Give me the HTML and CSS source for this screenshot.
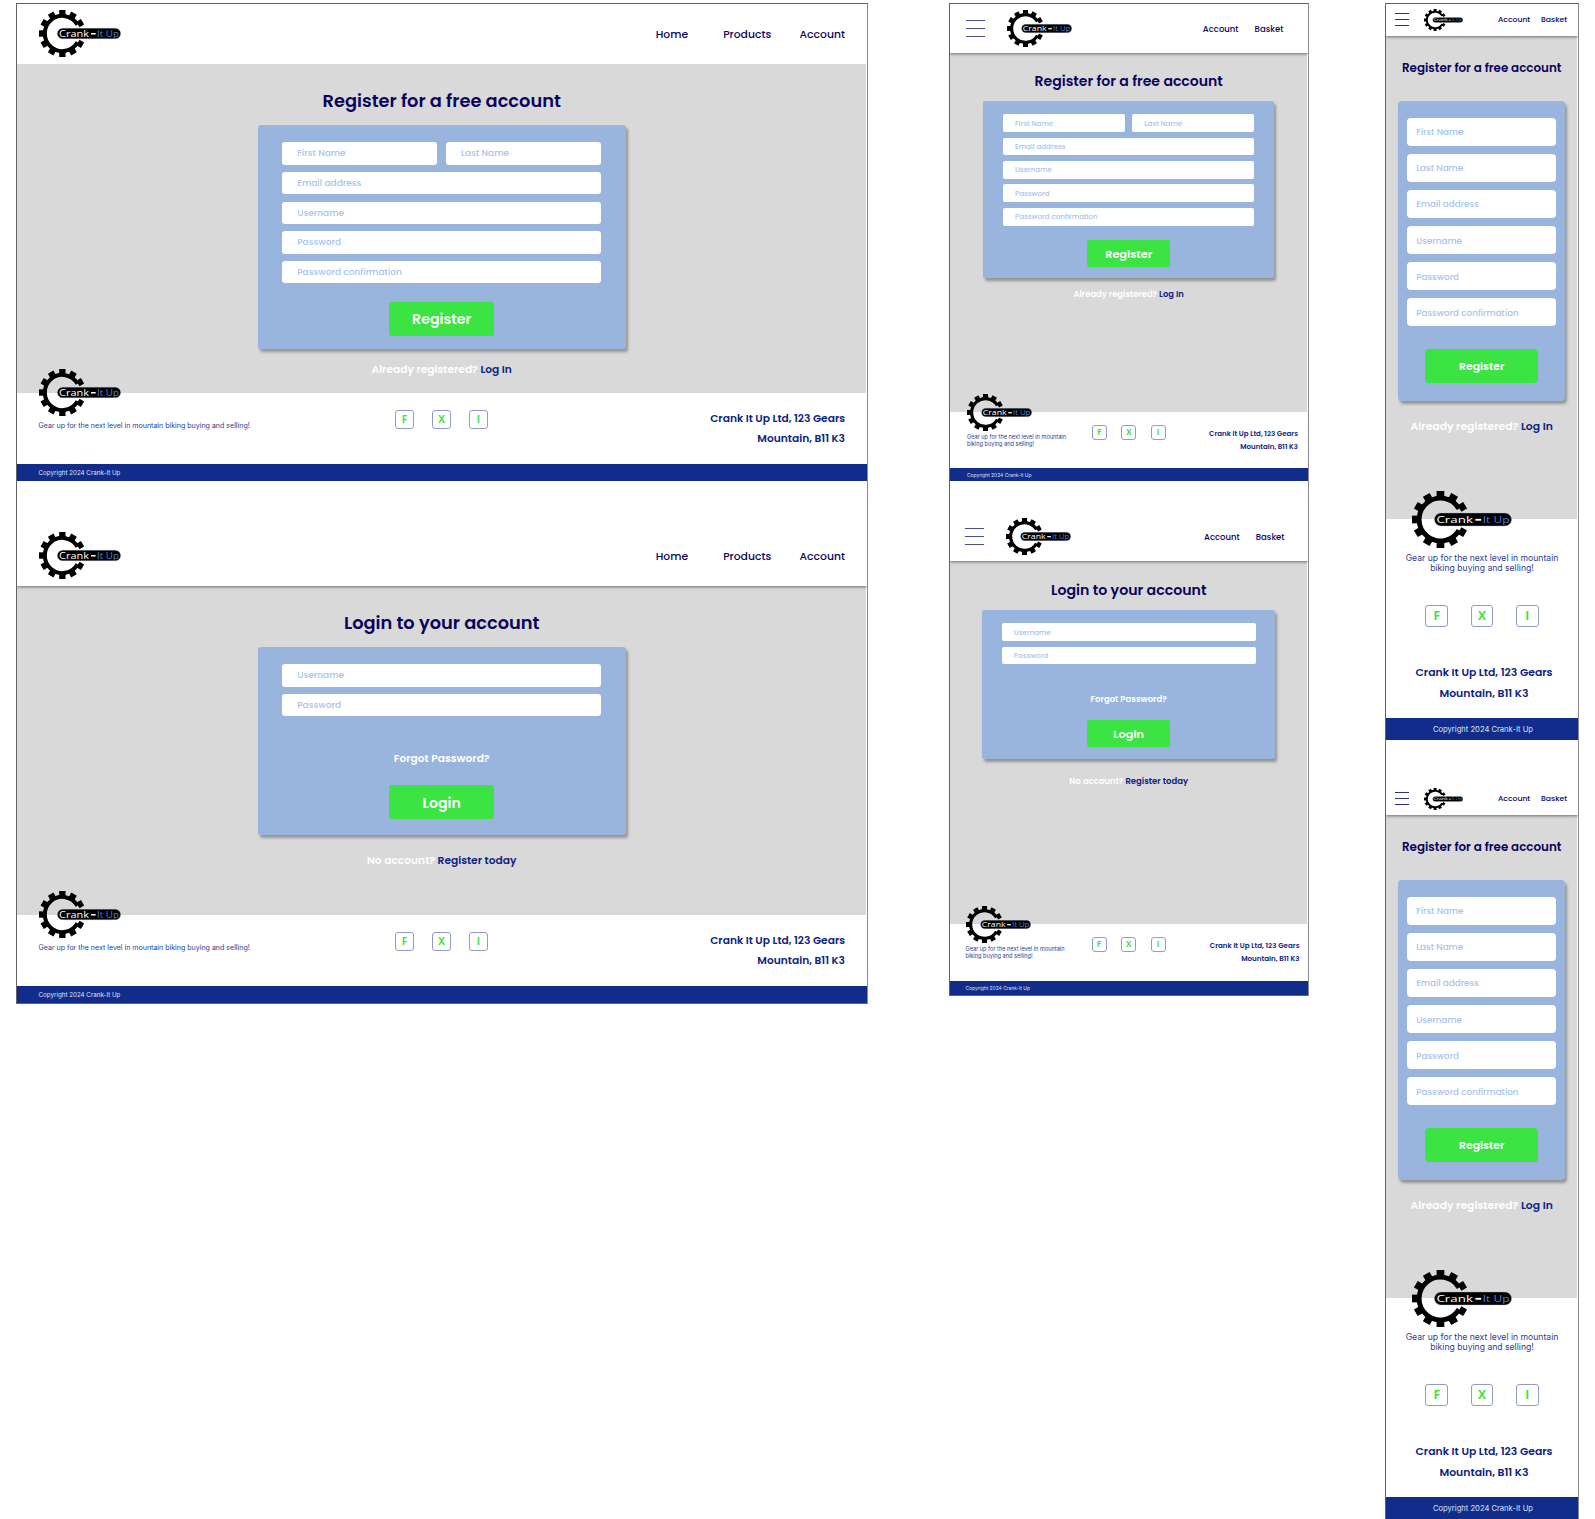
FILE: index.html
```html
<!DOCTYPE html>
<html lang="en">
<head>
<meta charset="utf-8">
<title>Crank-It Up</title>
<link rel="stylesheet" href="styles.css">
</head>
<body>
<svg class="defs" aria-hidden="true">
  <symbol id="logo" viewBox="0 0 246 140" preserveAspectRatio="none">
    <path d="M115.500 43.800 A52.500 52.500 0 1 0 115.500 96.200" fill="none" stroke="#000" stroke-width="12"/>
    <g fill="#000">
      <rect x="60.500" y="0" width="19" height="16"/>
      <rect x="60.500" y="0" width="19" height="16" transform="rotate(30 70 70)"/>
      <rect x="60.500" y="0" width="19" height="16" transform="rotate(60 70 70)"/>
      <rect x="60.500" y="0" width="19" height="16" transform="rotate(120 70 70)"/>
      <rect x="60.500" y="0" width="19" height="16" transform="rotate(150 70 70)"/>
      <rect x="60.500" y="0" width="19" height="16" transform="rotate(180 70 70)"/>
      <rect x="60.500" y="0" width="19" height="16" transform="rotate(210 70 70)"/>
      <rect x="60.500" y="0" width="19" height="16" transform="rotate(240 70 70)"/>
      <rect x="60.500" y="0" width="19" height="16" transform="rotate(270 70 70)"/>
      <rect x="60.500" y="0" width="19" height="16" transform="rotate(300 70 70)"/>
      <rect x="60.500" y="0" width="19" height="16" transform="rotate(330 70 70)"/>
    </g>
    <rect x="55" y="54" width="190" height="32" rx="16" fill="#000" stroke="#a9c4e6" stroke-width="1"/>
    <text x="60" y="79" class="logo-text" fill="#fff" textLength="90" lengthAdjust="spacingAndGlyphs">Crank</text>
    <rect x="156" y="68.500" width="14" height="4.500" fill="#fff"/>
    <text x="174" y="79" class="logo-text" fill="#4a80cf" textLength="66" lengthAdjust="spacingAndGlyphs">It Up</text>
  </symbol>
</svg>

<div class="board">
  <div class="frame desktop">
    <section class="screen register">
      <header class="top flat">
        <svg class="logo"><use href="#logo"/></svg>
        <nav><a>Home</a><a>Products</a><a>Account</a></nav>
      </header>
      <main>
        <h1>Register for a free account</h1>
        <form class="card">
          <div class="field half">First Name</div><div class="field half">Last Name</div>
          <div class="field">Email address</div>
          <div class="field">Username</div>
          <div class="field">Password</div>
          <div class="field">Password confirmation</div>
          <div class="button">Register</div>
        </form>
        <p class="prompt"><span>Already registered?</span> <a>Log In</a></p>
      </main>
      <footer>
        <div class="brand"><svg class="logo"><use href="#logo"/></svg><p>Gear up for the next level in mountain biking buying and selling!</p></div>
        <div class="social"><a>F</a><a>X</a><a>I</a></div>
        <address><span>Crank It Up Ltd, 123 Gears</span><br><span>Mountain, B11 K3</span></address>
      </footer>
      <div class="legal"><span>Copyright 2024 Crank-It Up</span></div>
    </section>
    <section class="screen login">
      <header class="top">
        <svg class="logo"><use href="#logo"/></svg>
        <nav><a>Home</a><a>Products</a><a>Account</a></nav>
      </header>
      <main>
        <h1>Login to your account</h1>
        <form class="card">
          <div class="field">Username</div>
          <div class="field">Password</div>
          <div class="forgot"><a>Forgot Password?</a></div>
          <div class="button">Login</div>
        </form>
        <p class="prompt"><span>No account?</span> <a>Register today</a></p>
      </main>
      <footer>
        <div class="brand"><svg class="logo"><use href="#logo"/></svg><p>Gear up for the next level in mountain biking buying and selling!</p></div>
        <div class="social"><a>F</a><a>X</a><a>I</a></div>
        <address><span>Crank It Up Ltd, 123 Gears</span><br><span>Mountain, B11 K3</span></address>
      </footer>
      <div class="legal"><span>Copyright 2024 Crank-It Up</span></div>
    </section>
  </div>

  <div class="frame tablet">
    <section class="screen register">
      <header class="top">
        <div class="menu"><i></i><i></i><i></i></div>
        <svg class="logo"><use href="#logo"/></svg>
        <nav><a>Account</a><a>Basket</a></nav>
      </header>
      <main>
        <h1>Register for a free account</h1>
        <form class="card">
          <div class="field half">First Name</div><div class="field half">Last Name</div>
          <div class="field">Email address</div>
          <div class="field">Username</div>
          <div class="field">Password</div>
          <div class="field">Password confirmation</div>
          <div class="button">Register</div>
        </form>
        <p class="prompt"><span>Already registered?</span> <a>Log In</a></p>
      </main>
      <footer>
        <div class="brand"><svg class="logo"><use href="#logo"/></svg><p>Gear up for the next level in mountain<br>biking buying and selling!</p></div>
        <div class="social"><a>F</a><a>X</a><a>I</a></div>
        <address><span>Crank It Up Ltd, 123 Gears</span><br><span>Mountain, B11 K3</span></address>
      </footer>
      <div class="legal"><span>Copyright 2024 Crank-It Up</span></div>
    </section>
    <section class="screen login">
      <header class="top">
        <div class="menu"><i></i><i></i><i></i></div>
        <svg class="logo"><use href="#logo"/></svg>
        <nav><a>Account</a><a>Basket</a></nav>
      </header>
      <main>
        <h1>Login to your account</h1>
        <form class="card">
          <div class="field">Username</div>
          <div class="field">Password</div>
          <div class="forgot"><a>Forgot Password?</a></div>
          <div class="button">Login</div>
        </form>
        <p class="prompt"><span>No account?</span> <a>Register today</a></p>
      </main>
      <footer>
        <div class="brand"><svg class="logo"><use href="#logo"/></svg><p>Gear up for the next level in mountain<br>biking buying and selling!</p></div>
        <div class="social"><a>F</a><a>X</a><a>I</a></div>
        <address><span>Crank It Up Ltd, 123 Gears</span><br><span>Mountain, B11 K3</span></address>
      </footer>
      <div class="legal"><span>Copyright 2024 Crank-It Up</span></div>
    </section>
  </div>

  <div class="frame mobile">
    <section class="screen register">
      <header class="top">
        <div class="menu"><i></i><i></i><i></i></div>
        <svg class="logo"><use href="#logo"/></svg>
        <nav><a>Account</a><a>Basket</a></nav>
      </header>
      <main>
        <h1>Register for a free account</h1>
        <form class="card">
          <div class="field">First Name</div>
          <div class="field">Last Name</div>
          <div class="field">Email address</div>
          <div class="field">Username</div>
          <div class="field">Password</div>
          <div class="field">Password confirmation</div>
          <div class="button">Register</div>
        </form>
        <p class="prompt"><span>Already registered?</span> <a>Log In</a></p>
      </main>
      <footer>
        <div class="brand"><svg class="logo"><use href="#logo"/></svg><p>Gear up for the next level in mountain<br>biking buying and selling!</p></div>
        <div class="social"><a>F</a><a>X</a><a>I</a></div>
        <address><span>Crank It Up Ltd, 123 Gears</span><br><span>Mountain, B11 K3</span></address>
      </footer>
      <div class="legal"><span>Copyright 2024 Crank-It Up</span></div>
    </section>
    <section class="screen repeat">
      <header class="top">
        <div class="menu"><i></i><i></i><i></i></div>
        <svg class="logo"><use href="#logo"/></svg>
        <nav><a>Account</a><a>Basket</a></nav>
      </header>
      <main>
        <h1>Register for a free account</h1>
        <form class="card">
          <div class="field">First Name</div>
          <div class="field">Last Name</div>
          <div class="field">Email address</div>
          <div class="field">Username</div>
          <div class="field">Password</div>
          <div class="field">Password confirmation</div>
          <div class="button">Register</div>
        </form>
        <p class="prompt"><span>Already registered?</span> <a>Log In</a></p>
      </main>
      <footer>
        <div class="brand"><svg class="logo"><use href="#logo"/></svg><p>Gear up for the next level in mountain<br>biking buying and selling!</p></div>
        <div class="social"><a>F</a><a>X</a><a>I</a></div>
        <address><span>Crank It Up Ltd, 123 Gears</span><br><span>Mountain, B11 K3</span></address>
      </footer>
      <div class="legal"><span>Copyright 2024 Crank-It Up</span></div>
    </section>
  </div>
</div>
</body>
</html>
```
FILE: styles.css
```css
* { box-sizing: border-box; }
body { margin: 0; background: #fff; font-family: Poppins, Inter, "Liberation Sans", sans-serif; overflow: hidden; }
h1, p, address { margin: 0; font-style: normal; }
.defs { display: none; }
.logo-text { font-family: "Open Sans", sans-serif; font-size: 24px; font-weight: 500; }

/* artboards */
.board { display: flex; align-items: flex-start; padding: 3px 0 0 16px; width: 1595px; height: 1519px; }
.frame { flex: none; border: 1px solid #626266; border-right-color: #8c8c90; }
.screen { display: flex; flex-direction: column; }
.screen + .screen { margin-top: var(--screen-gap); }

/* header */
.top { position: relative; display: flex; align-items: flex-start; flex: none; height: var(--top-h); padding: 0 var(--nav-right) 0 var(--side); background: #fff; box-shadow: 0 1px 3px rgba(0, 0, 0, .5); clip-path: inset(0 0 -6px 0); }
.top.flat { box-shadow: none; }
.logo { display: block; flex: none; width: var(--logo-w); height: var(--logo-h); }
.top .logo { margin-top: var(--logo-top); }
nav { display: flex; margin-left: auto; gap: var(--nav-gap); margin-top: var(--nav-top); font-size: var(--nav-fs); line-height: 16px; font-weight: 500; color: #0b0560; }
.menu { display: flex; flex-direction: column; flex: none; gap: var(--menu-step); width: var(--menu-w); margin: var(--menu-top) var(--menu-gap) 0 0; }
.menu i { height: 1px; background: #4a4d99; }

/* form area */
main { flex: none; height: var(--main-h); margin-right: 1px; padding-left: .4px; background: #d9d9d9; }
h1 { padding-top: var(--title-top); margin-bottom: var(--title-bottom); line-height: 24px; font-size: var(--title-fs); font-weight: 600; text-align: center; color: #09035c; }
.card { display: grid; grid-template-columns: 1fr 1fr; align-content: start; gap: var(--row-gap) var(--col-gap); width: var(--card-w); height: var(--card-h); margin: 0 auto; padding: var(--card-top) var(--card-side) 0; background: #99b5dd; border-radius: var(--radius); box-shadow: 2px 3px 3px rgba(0, 0, 0, .32); }
.field { grid-column: 1 / -1; display: flex; align-items: center; height: var(--field-h); padding: var(--field-drop) 0 0 var(--field-pad); background: #fff; border-radius: var(--radius); font-size: var(--field-fs); font-weight: 500; color: #a6c4ee; white-space: nowrap; }
.field.half { grid-column: auto; }
.button { grid-column: 1 / -1; justify-self: center; display: flex; align-items: center; justify-content: center; width: var(--btn-w); height: var(--btn-h); margin-top: var(--btn-top); padding-top: var(--btn-drop); background: #3be443; border-radius: var(--radius); color: #fff; font-size: var(--btn-fs); font-weight: 600; }
.forgot { grid-column: 1 / -1; text-align: center; line-height: 16px; margin-top: var(--forgot-top); font-size: var(--prompt-fs); font-weight: 600; color: #fff; }
.login { --btn-top: var(--login-btn-top); --card-h: var(--login-card-h); --prompt-top: var(--login-prompt-top); }
.prompt { margin-top: var(--prompt-top); line-height: 16px; text-align: center; font-size: var(--prompt-fs); font-weight: 600; color: #0c2384; white-space: nowrap; }
.prompt span { color: #fff; }

/* footer */
footer { position: relative; flex: none; display: flex; align-items: flex-start; height: var(--foot-h); padding: 0 var(--foot-right) 0 var(--foot-left); color: #0c2384; }
.brand { flex: none; width: var(--brand-w); margin-top: var(--brand-top); font-family: Inter, sans-serif; font-size: var(--tag-fs); line-height: var(--tag-lh); color: #2b4095; white-space: nowrap; }
.brand p { margin-top: var(--tag-top); }
.social { display: flex; gap: var(--soc-gap); margin-top: var(--soc-top); }
.social a { display: flex; align-items: center; justify-content: center; width: var(--soc); height: var(--soc); padding-bottom: 1px; border: 1px solid #8f9dce; border-radius: 3px; color: #3be443; font: 700 var(--soc-fs)/1 "Open Sans", sans-serif; }
address { margin: var(--addr-top) 0 0 auto; text-align: right; font-size: var(--addr-fs); line-height: var(--addr-lh); font-weight: 600; white-space: nowrap; }
.legal { flex: none; height: var(--legal-h); padding-left: var(--foot-left); background: #112c8b; color: #dfe4f4; font-family: Inter, sans-serif; font-size: var(--legal-fs); line-height: var(--legal-lh); }

.desktop {
  width: 852px;
  --screen-gap: 45px; --top-h: 60px; --side: 22px; --nav-right: 22px; --logo-w: 82px; --logo-h: 47px; --logo-top: 6px;
  --nav-gap: 28.400px; --nav-top: 23px; --nav-fs: 10.800px;
  --main-h: 329px; --title-top: 25px; --title-bottom: 12.300px; --title-fs: 17.800px;
  --row-gap: 7.300px; --col-gap: 8.700px; --card-w: 368px; --card-h: 223.400px; --card-top: 17px; --card-side: 24.500px; --radius: 3px;
  --field-h: 22.400px; --field-pad: 15px; --field-fs: 9px; --field-drop: .6px;
  --btn-w: 105px; --btn-h: 34px; --btn-top: 11px; --btn-fs: 14.200px; --btn-drop: 2px;
  --prompt-top: 13px; --prompt-fs: 10.670px; --forgot-top: 27px;
  --login-btn-top: 11.500px; --login-card-h: 187.500px; --login-prompt-top: 18.500px;
  --foot-h: 71px; --foot-left: 21.500px; --foot-right: 22px; --brand-w: 356.500px; --brand-top: -24px; --tag-fs: 7.060px; --tag-lh: 10px; --tag-top: 5px;
  --soc: 19px; --soc-gap: 18px; --soc-top: 17px; --soc-fs: 10px; --addr-top: 16px; --addr-fs: 10.670px; --addr-lh: 19.500px;
  --legal-h: 17px; --legal-lh: 18.500px; --legal-fs: 6.230px;
}
.desktop nav a:first-child { margin-right: 6.700px; }
.tablet {
  width: 360px; margin-left: 81px;
  --screen-gap: 31px; --top-h: 49px; --side: 16px; --nav-right: 24.700px; --logo-w: 65px; --logo-h: 37px; --logo-top: 6px;
  --nav-gap: 16px; --nav-top: 17px; --nav-fs: 8.500px; --menu-w: 19px; --menu-top: 16px; --menu-gap: 22px; --menu-step: 6.800px;
  --main-h: 359px; --title-top: 16px; --title-bottom: 8px; --title-fs: 14.050px;
  --row-gap: 5.600px; --col-gap: 7px; --card-w: 290.500px; --card-h: 176.500px; --card-top: 13.300px; --card-side: 19.500px; --radius: 2px;
  --field-h: 17.800px; --field-pad: 12px; --field-fs: 7.120px; --field-drop: 1px;
  --btn-w: 83px; --btn-h: 27.300px; --btn-top: 8.700px; --btn-fs: 11.300px; --btn-drop: 2px;
  --prompt-top: 8.500px; --prompt-fs: 8.400px; --forgot-top: 20.500px;
  --login-btn-top: 7.500px; --login-card-h: 149px; --login-prompt-top: 13.700px;
  --foot-h: 56px; --foot-left: 17px; --foot-right: 10px; --brand-w: 125px; --brand-top: -18.500px; --tag-fs: 5.600px; --tag-lh: 7px; --tag-top: 3.500px;
  --soc: 15px; --soc-gap: 14.300px; --soc-top: 13px; --soc-fs: 8px; --addr-top: 14.800px; --addr-fs: 7.040px; --addr-lh: 13.400px;
  --legal-h: 13px; --legal-lh: 14.500px; --legal-fs: 4.900px;
}
.tablet .login { --main-h: 363px; --card-w: 292.700px; --title-top: 17px; --title-bottom: 8px; --title-fs: 14.150px; --prompt-fs: 8.480px; --foot-h: 56.500px; --legal-h: 14.500px; --side: 14.500px; --foot-left: 15.500px; --brand-w: 126px; --soc-gap: 14.600px; --foot-right: 8.500px; --addr-fs: 7.100px; --nav-right: 23.500px; }
.mobile {
  width: 194px; margin-left: 76px;
  --screen-gap: 42px; --top-h: 32px; --side: 9px; --nav-right: 11px; --logo-w: 39px; --logo-h: 22px; --logo-top: 4.500px;
  --nav-gap: 10.800px; --nav-top: 8px; --nav-fs: 7.680px; --menu-w: 13.500px; --menu-top: 8.500px; --menu-gap: 15px; --menu-step: 5.200px;
  --main-h: 483px; --title-top: 20px; --title-bottom: 20.500px; --title-fs: 11.920px;
  --row-gap: 8.600px; --col-gap: 0px; --card-w: 167.400px; --card-h: 300.500px; --card-top: 17.500px; --card-side: 9.200px; --radius: 4px;
  --field-h: 27.500px; --field-pad: 9px; --field-fs: 8.800px; --field-drop: 2px;
  --btn-w: 113px; --btn-h: 34px; --btn-top: 14.500px; --btn-fs: 10.850px; --btn-drop: 1.500px;
  --prompt-top: 18px; --prompt-fs: 10.800px;
  --foot-h: 199px; --foot-left: 0px; --foot-right: 0px; --brand-w: auto; --brand-top: -28.500px; --tag-fs: 8.640px; --tag-lh: 10.400px; --tag-top: 5.500px;
  --soc: 22.500px; --soc-gap: 22.800px; --soc-top: 31px; --soc-fs: 12px; --addr-top: 36px; --addr-fs: 10.830px; --addr-lh: 20.500px;
  --legal-h: 22px; --legal-lh: 23px; --legal-fs: 7.600px;
}
.mobile .repeat { --top-h: 33px; --nav-top: 9px; --logo-top: 5.500px; --menu-top: 9.500px; }
.mobile .menu i { background: #2e2f8a; }
.mobile footer { flex-direction: column; align-items: center; }
.mobile .brand { text-align: center; }
.mobile .brand .logo { width: 100px; height: 57px; margin-left: 6px; }
.mobile address { align-self: stretch; margin-left: 0; padding-left: 4px; text-align: center; }
.mobile .legal { padding-left: 2px; text-align: center; }
```
